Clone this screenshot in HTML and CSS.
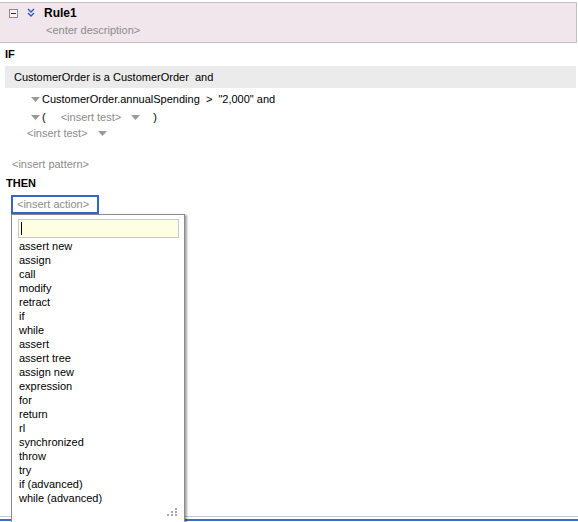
FILE: index.html
```
<!DOCTYPE html>
<html>
<head>
<meta charset="utf-8">
<link rel="stylesheet" href="styles.css">
</head>
<body>
<div class="page">
  <div class="header">
    <div class="title-row">
      <svg class="minus" width="9" height="9" viewBox="0 0 9 9"><rect x="0.5" y="0.5" width="8" height="8" fill="#f4f4f4" stroke="#7a8fb0"/><rect x="2" y="4" width="5" height="1" fill="#1f2f5a"/></svg>
      <svg class="chev" width="8" height="9" viewBox="0 0 8 9"><path d="M1 1 L4 4 L7 1 M1 5 L4 8 L7 5" fill="none" stroke="#2e55c0" stroke-width="1.4"/></svg>
      <span class="rule-name">Rule1</span>
    </div>
    <div class="desc">&lt;enter description&gt;</div>
  </div>

  <div class="kw kw-if">IF</div>
  <div class="pattern-bar">CustomerOrder is a CustomerOrder&nbsp; and</div>

  <div class="row row-a">
    <svg class="tri" width="9" height="5" viewBox="0 0 9 5"><polygon points="0,0 9,0 4.5,5" fill="#999"/></svg>
    <span>CustomerOrder.annualSpending&nbsp; &gt;&nbsp; "2,000" and</span>
  </div>
  <div class="row row-b">
    <svg class="tri" width="9" height="5" viewBox="0 0 9 5"><polygon points="0,0 9,0 4.5,5" fill="#999"/></svg>
    <span>(</span>
    <span class="ph ins1">&lt;insert test&gt;</span>
    <svg class="tri tri2" width="9" height="5" viewBox="0 0 9 5"><polygon points="0,0 9,0 4.5,5" fill="#999"/></svg>
    <span class="paren">)</span>
  </div>
  <div class="row row-c">
    <span class="ph">&lt;insert test&gt;</span>
    <svg class="tri tri3" width="9" height="5" viewBox="0 0 9 5"><polygon points="0,0 9,0 4.5,5" fill="#999"/></svg>
  </div>

  <div class="ph ins-pattern">&lt;insert pattern&gt;</div>
  <div class="kw kw-then">THEN</div>

  <div class="action-wrap">
    <div class="action-box">&lt;insert action&gt;</div>
    <div class="popup">
      <div class="search"><span class="caret"></span></div>
      <ul class="items">
        <li>assert new</li>
        <li>assign</li>
        <li>call</li>
        <li>modify</li>
        <li>retract</li>
        <li>if</li>
        <li>while</li>
        <li>assert</li>
        <li>assert tree</li>
        <li>assign new</li>
        <li>expression</li>
        <li>for</li>
        <li>return</li>
        <li>rl</li>
        <li>synchronized</li>
        <li>throw</li>
        <li>try</li>
        <li>if (advanced)</li>
        <li>while (advanced)</li>
      </ul>
      <svg class="grip" width="11" height="10" viewBox="0 0 11 10"><g fill="#a8a8a8"><rect x="8" y="0" width="2" height="2"/><rect x="4" y="3" width="2" height="2"/><rect x="8" y="3" width="2" height="2"/><rect x="0" y="6" width="2" height="2"/><rect x="4" y="6" width="2" height="2"/><rect x="8" y="6" width="2" height="2"/></g></svg>
    </div>
  </div>

  <div class="footer">
    <div class="line-gray"></div>
    <div class="line-blue"></div>
  </div>
</div>
</body>
</html>
```
FILE: styles.css
```
* { box-sizing: border-box; }
html, body { margin: 0; padding: 0; background: #fff; }
body {
  font-family: "Liberation Sans", Arial, sans-serif;
  font-size: 11px;
  color: #000;
}
.page {
  width: 578px;
  height: 522px;
  display: flex;
  flex-direction: column;
  overflow: hidden;
}
.header {
  margin-top: 2px;
  margin-right: 1px;
  height: 41px;
  background: #f0e6eb;
  border: 1px solid #c4c0c2;
  border-left: none;
  padding-top: 3px;
}
.title-row {
  display: flex;
  align-items: center;
  height: 14px;
  line-height: 14px;
}
.minus { margin-left: 9px; margin-top: 1px; }
.chev { margin-left: 9px; margin-top: -2px; }
.rule-name {
  margin-left: 9px;
  font-weight: bold;
  font-size: 12px;
}
.desc {
  margin-top: 3px;
  padding-left: 46px;
  line-height: 14px;
  color: #8c8c8c;
}
.kw {
  font-weight: bold;
  line-height: 14px;
}
.kw-if { margin-top: 4px; padding-left: 5px; }
.pattern-bar {
  margin-top: 5px;
  margin-left: 5px;
  margin-right: 2px;
  height: 22px;
  line-height: 22px;
  background: #ebebeb;
  padding-left: 9px;
}
.row {
  display: flex;
  align-items: center;
  height: 16px;
  line-height: 16px;
}
.row-a { margin-top: 3px; padding-left: 31px; }
.row-b { margin-top: 2px; padding-left: 31px; }
.row-c { margin-top: 0; padding-left: 27px; }
.tri { margin-right: 2px; flex: none; }
.ph { color: #8c8c8c; }
.ins1 { margin-left: 15px; }
.tri2 { margin-left: 10px; }
.paren { margin-left: 11px; }
.tri3 { margin-left: 10px; }
.ins-pattern {
  margin-top: 15px;
  padding-left: 12px;
  line-height: 16px;
}
.kw-then { margin-top: 3px; padding-left: 6px; line-height: 16px; }
.action-wrap {
  position: relative;
  margin-top: 4px;
  margin-left: 11px;
  align-self: flex-start;
}
.action-box {
  border: 2px solid #3366c6;
  height: 19px;
  line-height: 15px;
  padding: 0 5px 0 4px;
  color: #8c8c8c;
  width: 88px;
}
.popup {
  position: absolute;
  left: 0;
  top: 19px;
  width: 174px;
  height: 309px;
  background: #fff;
  border: 1px solid #8a8a8a;
  box-shadow: 2px 1px 2px rgba(0,0,0,0.35);
  z-index: 5;
  padding-top: 4px;
}
.search {
  margin-left: 6px;
  width: 161px;
  height: 19px;
  background: #fefee2;
  border: 1px solid #c8c8c8;
  position: relative;
}
.caret {
  position: absolute;
  left: 2px;
  top: 2px;
  width: 1px;
  height: 13px;
  background: #000;
}
.items {
  list-style: none;
  margin: 1px 0 0 0;
  padding: 0 0 0 7px;
}
.items li {
  height: 14px;
  line-height: 14px;
}
.grip {
  position: absolute;
  right: 6px;
  bottom: 4px;
}
.footer {
  margin-top: auto;
}
.line-gray {
  height: 1px;
  background: #c8c8c8;
  margin-bottom: 2px;
}
.line-blue {
  height: 2px;
  background: #3a6fcc;
  margin-bottom: 1px;
}
```
